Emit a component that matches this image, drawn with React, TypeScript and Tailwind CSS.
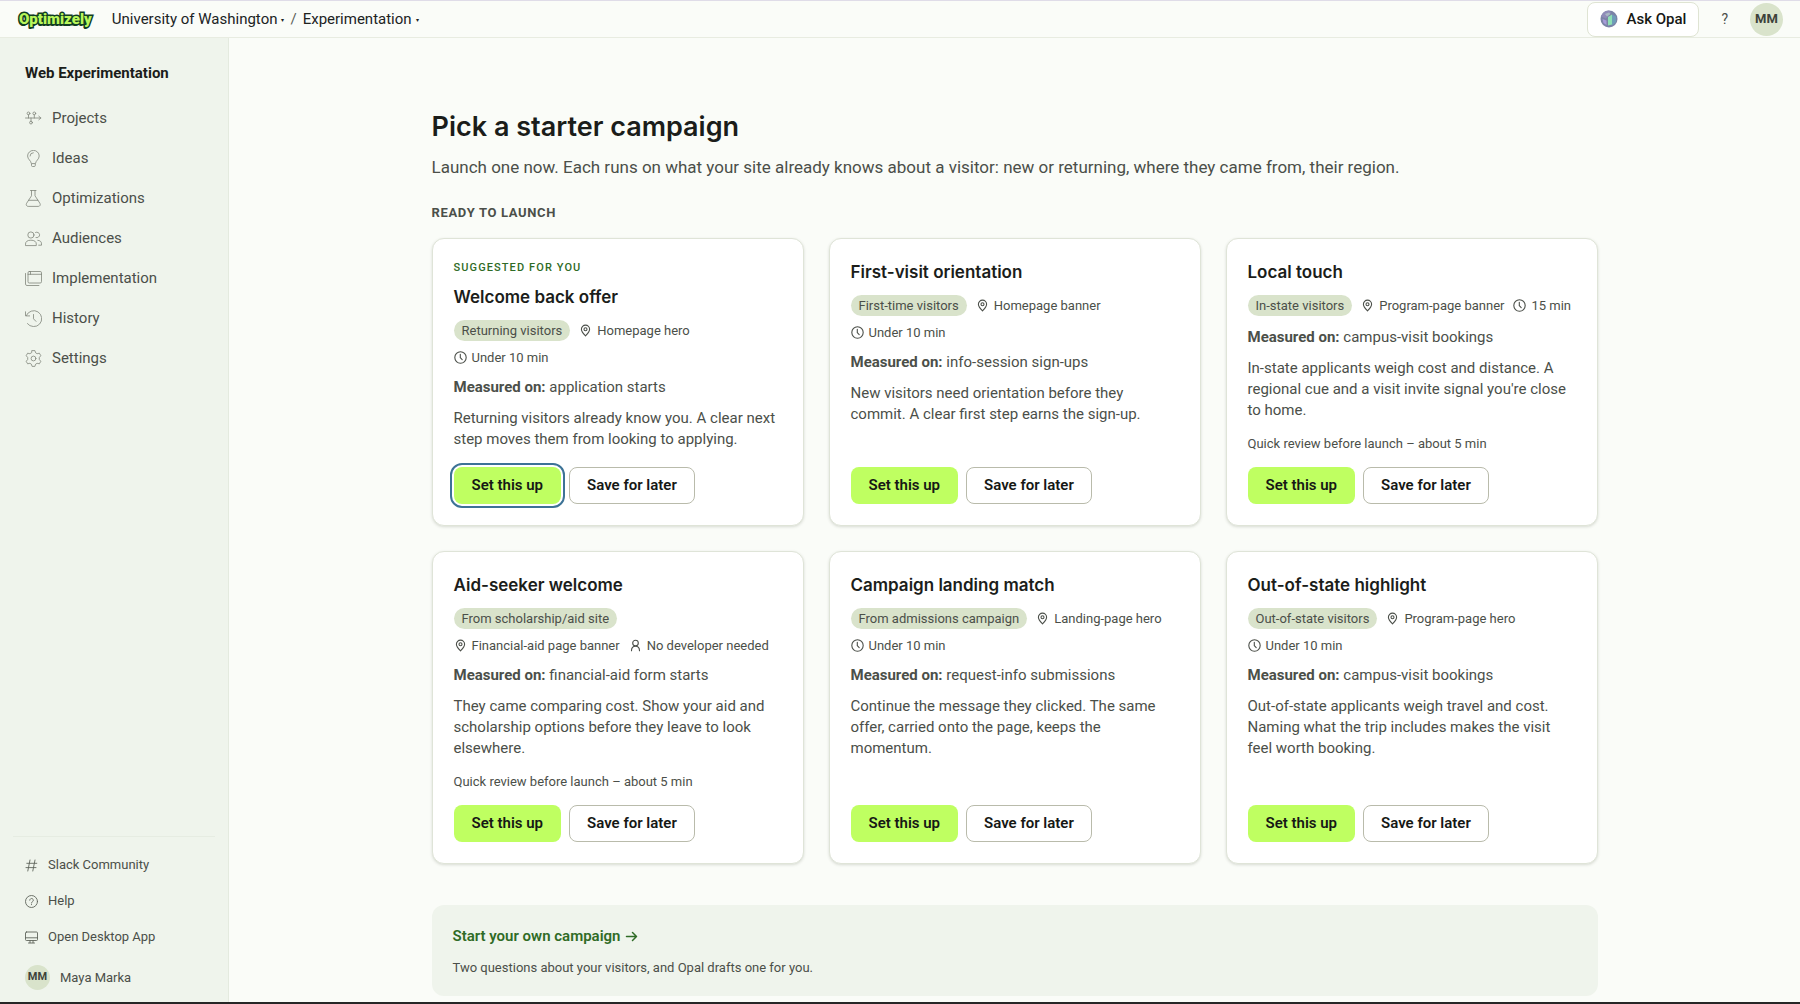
import React from "react";

type IconProps = { className?: string };

const stroke = {
  fill: "none",
  stroke: "currentColor",
  strokeLinecap: "round" as const,
  strokeLinejoin: "round" as const,
};

const ProjectsIcon = () => (
  <svg viewBox="0 0 17 17" className="size-[17px]" {...stroke} strokeWidth="0.8" aria-hidden="true">
    <path d="M.5 8h15.3M13.8 6.2 15.9 8l-2.1 1.8M3.5 4.8V8M9.3 4.8V8M6 8v3.2" />
    <circle cx="3.5" cy="3.4" r="1.4" />
    <circle cx="9.3" cy="3.4" r="1.4" />
    <circle cx="6" cy="12.6" r="1.4" />
  </svg>
);
const IdeasIcon = () => (
  <svg viewBox="0 0 17 17" className="size-[17px]" {...stroke} strokeWidth="0.8" aria-hidden="true">
    <path d="M6.3 13.2c-.2-2.6-3.7-3.8-3.7-7.2a5.8 5.6 0 0 1 11.6 0c0 3.4-3.5 4.6-3.7 7.2zM6.5 14.3v1.2c0 .6.4 1 1 1h1.8c.6 0 1-.4 1-1v-1.2M5 6a3.3 3.3 0 0 1 3.3-3.3" />
  </svg>
);
const FlaskIcon = () => (
  <svg viewBox="0 0 17 17" className="size-[17px]" {...stroke} strokeWidth="0.8" aria-hidden="true">
    <path d="M5.5.5H11M6.5.5v5.3L1.6 13.3c-.9 1.5 0 3.1 1.6 3.1h10.1c1.6 0 2.5-1.6 1.6-3.1L10 5.8V.5M3.6 10.3h9.3" />
  </svg>
);
const AudienceIcon = () => (
  <svg viewBox="0 0 17 17" className="size-[17px]" {...stroke} strokeWidth="0.8" aria-hidden="true">
    <circle cx="5.9" cy="5" r="3.1" />
    <path d="M.5 15.2v-1.1c0-2.5 1.9-3.9 5.4-3.9s5.4 1.4 5.4 3.9v1.1zM10.6 2.4a2.8 2.8 0 1 1 .4 5.2M12.8 10.3c2.5.2 3.7 1.5 3.7 3.6v1.3h-2.8" />
  </svg>
);
const WindowIcon = () => (
  <svg viewBox="0 0 17 17" className="size-[17px]" {...stroke} strokeWidth="0.8" aria-hidden="true">
    <rect x="3" y="1.5" width="13.5" height="11.5" rx="1.3" />
    <path d="M3 4.3h13.5M5.5 1.5v2.8M.5 3.5v10.6c0 .8.6 1.4 1.4 1.4h12" />
  </svg>
);
const HistoryIcon = () => (
  <svg viewBox="0 0 17 17" className="size-[17px]" {...stroke} strokeWidth="0.8" aria-hidden="true">
    <path d="M1.3 5.6A8 8 0 1 1 2.4 13.6M.5 1.8v4.1h4.1M8.5 4.5v4.3l2.5 2.6" />
  </svg>
);
const SettingsIcon = () => (
  <svg viewBox="0 0 17 17" className="size-[17px]" {...stroke} strokeWidth="0.8" aria-hidden="true">
    <path d="M7.1.6h2.8l.7 2.2 1.5.9 2.3-.5 1.4 2.500-1.500 1.800v2l1.500 1.800-1.400 2.500-2.300-.5-1.500.9-.7 2.200H7.100l-.7-2.200-1.500-.9-2.300.5-1.400-2.500 1.500-1.800v-2L1.200 5.700l1.400-2.500 2.300.5 1.500-.9z" />
    <circle cx="8.5" cy="8.5" r="2.4" />
  </svg>
);
const HashIcon = () => (
  <svg viewBox="0 0 13 13" className="size-[13px]" {...stroke} strokeWidth="0.9" aria-hidden="true">
    <path d="M5 1 2.8 12M10 1 7.8 12M1.8 4.3h10M1 8.6h10" />
  </svg>
);
const HelpIcon = () => (
  <svg viewBox="0 0 13 13" className="size-[13px]" {...stroke} strokeWidth="0.9" aria-hidden="true">
    <circle cx="6.5" cy="6.5" r="6" />
    <path d="M4.7 5.2a1.8 1.8 0 1 1 2.7 1.6c-.6.3-.9.6-.9 1.2M6.5 9.5v.2" />
  </svg>
);
const DesktopIcon = () => (
  <svg viewBox="0 0 13 13" className="size-[13px]" {...stroke} strokeWidth="0.9" aria-hidden="true">
    <rect x=".5" y="1" width="12" height="8.5" rx="1" />
    <path d="M.5 6.8h12M5 9.5v2.2M8 9.5v2.2M3.5 12h6" />
  </svg>
);
const PinIcon = ({ className }: IconProps) => (
  <svg viewBox="0 0 13 13" className={className} {...stroke} strokeWidth="1.1" aria-hidden="true">
    <path d="M6.5 11.8C4.5 9.7 2.4 7.7 2.4 5.2a4.1 4.1 0 0 1 8.2 0c0 2.5-2.1 4.5-4.1 6.6z" />
    <circle cx="6.5" cy="5.2" r="1.5" />
  </svg>
);
const ClockIcon = ({ className }: IconProps) => (
  <svg viewBox="0 0 13 13" className={className} {...stroke} strokeWidth="1.1" aria-hidden="true">
    <circle cx="6.5" cy="6.5" r="5.7" />
    <path d="M6.3 3.3v3.4l1.9 1.9" />
  </svg>
);
const PersonIcon = ({ className }: IconProps) => (
  <svg viewBox="0 0 13 13" className={className} {...stroke} strokeWidth="1.1" aria-hidden="true">
    <circle cx="6.5" cy="4" r="2.8" />
    <path d="M2.5 11.7c0-2.8 1.5-4.5 4-4.5s4 1.7 4 4.5" />
  </svg>
);

const metaIcons = { pin: PinIcon, clock: ClockIcon, person: PersonIcon };

type Campaign = {
  title: string;
  suggested?: boolean;
  audience: string;
  meta: { icon: keyof typeof metaIcons; text: string }[];
  metric: string;
  body: string;
  review?: boolean;
};

const campaigns: Campaign[] = [
  {
    title: "Welcome back offer",
    suggested: true,
    audience: "Returning visitors",
    meta: [
      { icon: "pin", text: "Homepage hero" },
      { icon: "clock", text: "Under 10 min" },
    ],
    metric: "application starts",
    body: "Returning visitors already know you. A clear next step moves them from looking to applying.",
  },
  {
    title: "First-visit orientation",
    audience: "First-time visitors",
    meta: [
      { icon: "pin", text: "Homepage banner" },
      { icon: "clock", text: "Under 10 min" },
    ],
    metric: "info-session sign-ups",
    body: "New visitors need orientation before they commit. A clear first step earns the sign-up.",
  },
  {
    title: "Local touch",
    audience: "In-state visitors",
    meta: [
      { icon: "pin", text: "Program-page banner" },
      { icon: "clock", text: "15 min" },
    ],
    metric: "campus-visit bookings",
    body: "In-state applicants weigh cost and distance. A regional cue and a visit invite signal you're close to home.",
    review: true,
  },
  {
    title: "Aid-seeker welcome",
    audience: "From scholarship/aid site",
    meta: [
      { icon: "pin", text: "Financial-aid page banner" },
      { icon: "person", text: "No developer needed" },
    ],
    metric: "financial-aid form starts",
    body: "They came comparing cost. Show your aid and scholarship options before they leave to look elsewhere.",
    review: true,
  },
  {
    title: "Campaign landing match",
    audience: "From admissions campaign",
    meta: [
      { icon: "pin", text: "Landing-page hero" },
      { icon: "clock", text: "Under 10 min" },
    ],
    metric: "request-info submissions",
    body: "Continue the message they clicked. The same offer, carried onto the page, keeps the momentum.",
  },
  {
    title: "Out-of-state highlight",
    audience: "Out-of-state visitors",
    meta: [
      { icon: "pin", text: "Program-page hero" },
      { icon: "clock", text: "Under 10 min" },
    ],
    metric: "campus-visit bookings",
    body: "Out-of-state applicants weigh travel and cost. Naming what the trip includes makes the visit feel worth booking.",
  },
];

const mainNav = [
  { label: "Projects", Icon: ProjectsIcon },
  { label: "Ideas", Icon: IdeasIcon },
  { label: "Optimizations", Icon: FlaskIcon },
  { label: "Audiences", Icon: AudienceIcon },
  { label: "Implementation", Icon: WindowIcon },
  { label: "History", Icon: HistoryIcon },
  { label: "Settings", Icon: SettingsIcon },
];

const footerNav = [
  { label: "Slack Community", Icon: HashIcon },
  { label: "Help", Icon: HelpIcon },
  { label: "Open Desktop App", Icon: DesktopIcon },
];

function CampaignCard({ c }: { c: Campaign }) {
  return (
    <article className="flex flex-col rounded-xl border border-[#dfe4d8] bg-white px-[21px] py-[21px] shadow-[0_1px_3px_rgba(60,70,50,0.18)]">
      {c.suggested && (
        <p className="mb-[9px] text-[11px] leading-4 font-medium tracking-widest text-[#2f6b26] uppercase">
          Suggested for you
        </p>
      )}
      <h3 className="font-[Inter,sans-serif] text-[17px] leading-[25px] font-semibold text-[#1b1d1a]">{c.title}</h3>
      <div className="mt-[10px] flex flex-wrap items-center gap-x-[9px] gap-y-2 text-[13px] leading-[17px]">
        <span className="rounded-full bg-[#d9e3cb] px-2 py-[2px]">{c.audience}</span>
        {c.meta.map(({ icon, text }) => {
          const Icon = metaIcons[icon];
          return (
            <span key={text} className="flex items-center gap-[5px]">
              <Icon className="size-[13px]" />
              {text}
            </span>
          );
        })}
      </div>
      <p className="mt-[11px] text-[15px] leading-[21px]">
        <strong className="font-bold">Measured on:</strong> {c.metric}
      </p>
      <p className="mt-[10px] text-[15px] leading-[21px]">{c.body}</p>
      {c.review && <p className="mt-[14px] text-[13px] leading-[17px]">Quick review before launch – about 5 min</p>}
      <div className="mt-auto flex gap-2 pt-[15px] text-[15px] leading-[21px] font-semibold text-[#161815]">
        <button
          type="button"
          className={
            c.suggested
              ? "rounded-lg bg-[#bfff61] px-[18px] py-2 outline-2 outline-offset-2 outline-[#3d7396]"
              : "rounded-lg bg-[#bfff61] px-[18px] py-2"
          }
        >
          Set this up
        </button>
        <button type="button" className="rounded-lg border border-[#b9bbab] bg-white px-[17px] py-[7px]">
          Save for later
        </button>
      </div>
    </article>
  );
}

export default function App() {
  return (
    <div className="flex min-h-screen flex-col border-t border-b-2 border-t-[#dfdce8] border-b-[#262626] bg-[#fafcf8] font-[Roboto,sans-serif] text-[#4b4f49]">
      <header className="flex h-[37px] items-center border-b border-[#e8ece1] pr-[17px] pl-[19px] text-[15px] text-[#20231f]">
        <a
          href="#"
          className="text-[15px] leading-5 font-black text-[#b9f75c] [-webkit-text-stroke:3px_#123d22] [paint-order:stroke_fill] [text-shadow:-1px_2px_0_#123d22]"
        >
          Optimizely
        </a>
        <nav aria-label="Breadcrumb" className="ml-5 flex items-center">
          <button type="button" className="flex items-center gap-1">
            University of Washington <span className="text-[6px]">▾</span>
          </button>
          <span className="mx-[6px] text-[#5b5f58]">/</span>
          <button type="button" className="flex items-center gap-1">
            Experimentation <span className="text-[6px]">▾</span>
          </button>
        </nav>
        <div className="ml-auto flex items-center">
          <button
            type="button"
            className="flex h-[35px] items-center gap-2 rounded-lg border border-[#dfe4d3] bg-white px-3 text-[15px] font-medium text-[#161815]"
          >
            <svg viewBox="0 0 18 18" className="size-[18px]" aria-hidden="true">
              <circle cx="9" cy="9" r="8.5" fill="#7b83a6" />
              <path d="M9 .5a8.500 8.500 0 0 0-8 6l5 2 5-6z" fill="#8f8bb8" />
              <path d="M8 7l4-2.500v10l-4 1z" fill="#8fe0b4" />
              <path d="M12 4.500l4 2v5.500l-4 3.500z" fill="#6f9db8" />
              <path d="M2.500 9l4 1.500v4.500l-3-2z" fill="#a69bd8" />
              <path d="M5 4l4-1.500 1.500 1.500L7 6.500z" fill="#a9b8c4" />
            </svg>
            Ask Opal
          </button>
          <button type="button" aria-label="Help" className="mx-[22px] text-sm text-[#4b4f49]">
            ?
          </button>
          <button type="button" className="size-[33px] rounded-full bg-[#d9e3cb] text-[13px] font-bold text-[#3d423a]">
            MM
          </button>
        </div>
      </header>
      <div className="flex flex-1">
        <aside className="flex w-[229px] shrink-0 flex-col border-r border-[#e4eadf] bg-[#eff4ec]">
          <h2 className="mt-[25px] px-[25px] text-[15px] leading-[21px] font-bold text-[#1b1d1a]">Web Experimentation</h2>
          <nav aria-label="Main" className="mt-[14px] flex flex-col">
            {mainNav.map(({ label, Icon }) => (
              <a key={label} href="#" className="flex h-10 items-center gap-[10px] px-[25px] text-[15px]">
                <span className="text-[#80857b]">
                  <Icon />
                </span>
                {label}
              </a>
            ))}
          </nav>
          <div className="mx-[13px] mt-auto border-t border-[#e6ece2] px-3 pt-[10px] pb-[2px] text-[13px]">
            {footerNav.map(({ label, Icon }) => (
              <a key={label} href="#" className="flex h-9 items-center gap-[10px]">
                <span className="text-[#60655c]">
                  <Icon />
                </span>
                {label}
              </a>
            ))}
            <a href="#" className="flex h-[45px] items-center gap-[10px]">
              <span className="flex size-[25px] items-center justify-center rounded-full bg-[#d9e3cb] text-[11px] font-bold text-[#3d423a]">
                MM
              </span>
              Maya Marka
            </a>
          </div>
        </aside>
        <main className="flex-1 px-8 pt-[71px] pb-[5px]">
          <div className="mx-auto max-w-[1166px]">
            <h1 className="font-[Inter,sans-serif] text-[27px] leading-9 font-semibold text-[#1b1d1a]">
              Pick a starter campaign
            </h1>
            <p className="mt-[10px] text-[17px] leading-[25px]">
              Launch one now. Each runs on what your site already knows about a visitor: new or returning, where they
              came from, their region.
            </p>
            <h2 className="mt-6 text-[13px] leading-[17px] font-bold tracking-wider uppercase">Ready to launch</h2>
            <section className="mt-[17px] grid grid-cols-3 gap-[25px]">
              {campaigns.map((c) => (
                <CampaignCard key={c.title} c={c} />
              ))}
            </section>
            <section className="mt-[41px] rounded-xl bg-[#eff4ec] px-[21px] pt-[21px] pb-5">
              <a href="#" className="flex items-center gap-1 text-[15px] leading-[21px] font-semibold text-[#2f6b26]">
                Start your own campaign
                <svg viewBox="0 0 13 13" className="size-[13px]" {...stroke} strokeWidth="1.5" aria-hidden="true">
                  <path d="M1.5 6.5h10M7.5 2.5l4 4-4 4" />
                </svg>
              </a>
              <p className="mt-3 text-[13px] leading-[17px]">
                Two questions about your visitors, and Opal drafts one for you.
              </p>
            </section>
          </div>
        </main>
      </div>
    </div>
  );
}
